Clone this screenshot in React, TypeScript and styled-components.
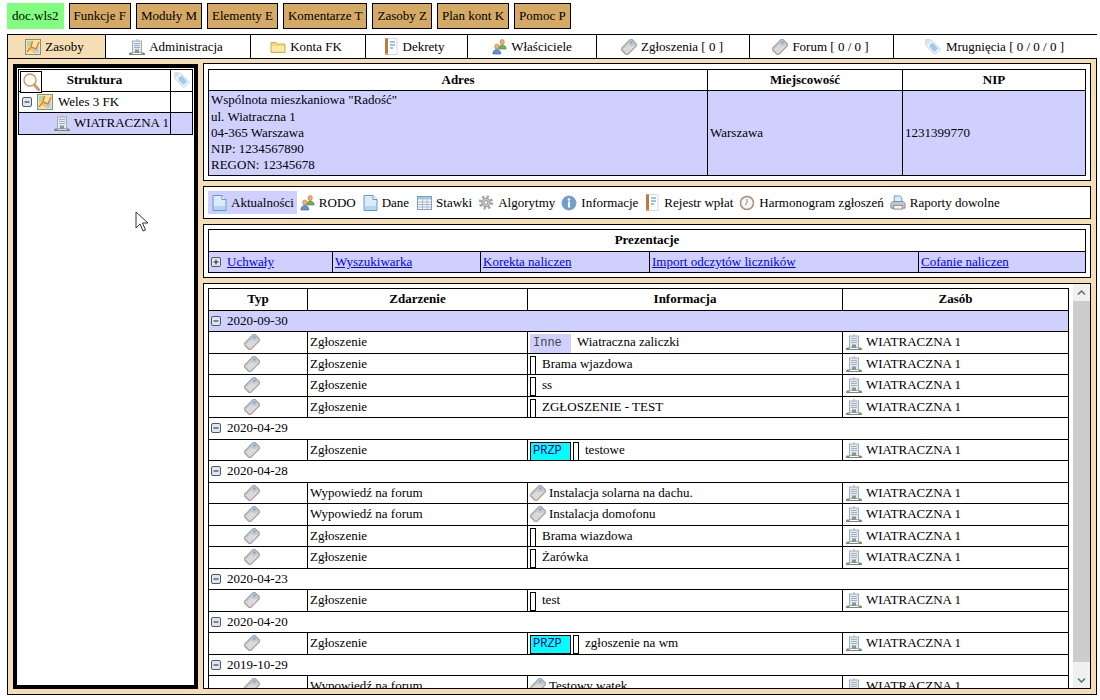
import React from "react";
import styled, { createGlobalStyle } from "styled-components";

const GlobalStyle = createGlobalStyle`
  html, body {
    margin: 0;
    padding: 0;
    background: #fff;
    color: #000;
    font-family: "Liberation Serif", "Times New Roman", serif;
    font-size: 13px;
    overflow: hidden;
  }
`;

const Page = styled.div`
  width: 1090px;
  height: 700px;
  padding: 3px 0 0 7px;
`;

const MenuBar = styled.div`
  display: flex;
  gap: 5px;
  height: 26px;
  margin-bottom: 5px;
`;

const MenuButton = styled.div<{ $active?: boolean }>`
  display: flex;
  align-items: center;
  padding: 0 ${(p) => (p.$active ? "5px" : "4px")};
  background: ${(p) => (p.$active ? "#80ff80" : "#d4aa66")};
  border: ${(p) => (p.$active ? "none" : "1px solid #000")};
  white-space: nowrap;
`;

const TabBar = styled.div`
  display: flex;
  height: 25px;
  border: 1px solid #000;
  box-sizing: border-box;
`;

const Tab = styled.div<{ $w: number; $active?: boolean; $pr?: number }>`
  width: ${(p) => p.$w}px;
  flex: none;
  box-sizing: border-box;
  display: flex;
  align-items: center;
  justify-content: center;
  gap: 4px;
  padding-right: ${(p) => p.$pr ?? 2}px;
  background: ${(p) => (p.$active ? "#f5deb3" : "#fff")};
  border-right: 1px solid #000;
  &:last-child {
    border-right: none;
  }
`;

const Body = styled.div`
  display: grid;
  grid-template-columns: 185px 1fr;
  gap: 5px;
  height: 636px;
  box-sizing: border-box;
  padding: 4px 5px 5px 5px;
  background: #f5deb3;
  border: 1px solid #000;
  border-top: none;
`;

const TreePane = styled.div`
  background: #fff;
  border: 4px solid #000;
  height: 625px;
  margin-top: 1px;
  box-sizing: border-box;
  padding: 1px;
`;

const RightColumn = styled.div`
  display: flex;
  flex-direction: column;
  gap: 5px;
  min-width: 0;
`;

const Panel = styled.div<{ $top: number }>`
  background: #fff;
  border: 1px solid #000;
  padding: ${(p) => p.$top}px 4px 4px;
`;

const Table = styled.table`
  width: 100%;
  border-collapse: collapse;
  table-layout: fixed;
  td, th {
    border: 1px solid #000;
    padding: 0 2px;
    font-size: 13px;
    height: 21.5px;
    box-sizing: border-box;
    overflow: hidden;
    white-space: nowrap;
  }
  th {
    font-weight: bold;
    text-align: center;
  }
`;

const Lavender = styled.tr`
  background: #d0d0ff;
`;

const TreeHead = styled.th`
  position: relative;
  overflow: visible !important;
`;

const TreeTagCell = styled.th`
  padding: 0 !important;
  svg {
    display: block;
    margin: 0 auto;
  }
`;

const SearchBox = styled.div`
  position: absolute;
  left: 1px;
  top: 1px;
  width: 22px;
  height: 22px;
  border: 1px solid #000;
  box-sizing: border-box;
  background: #fff;
  display: flex;
  align-items: center;
  justify-content: center;
  z-index: 1;
`;

const CellRow = styled.div<{ $indent?: number; $gap?: number }>`
  display: flex;
  align-items: center;
  gap: ${(p) => p.$gap ?? 5}px;
  padding-left: ${(p) => p.$indent ?? 0}px;
`;

const AddressHead = styled.tr`
  th {
    height: 21px;
  }
`;

const Address = styled.td`
  height: 85px !important;
  line-height: 16.25px;
  white-space: pre-line !important;
`;

const NavPanel = styled.div`
  background: #fff;
  border: 1px solid #000;
  height: 33px;
  box-sizing: border-box;
  padding: 4px 4px;
  display: flex;
`;

const NavItem = styled.div<{ $active?: boolean; $pr?: number }>`
  display: flex;
  align-items: center;
  gap: 4px;
  padding: 0 ${(p) => p.$pr ?? 3}px 0 ${(p) => (p.$active ? "4px" : "3px")};
  background: ${(p) => (p.$active ? "#d0d0ff" : "transparent")};
  white-space: nowrap;
`;

const LinkText = styled.a`
  color: #0000ee;
  text-decoration: underline;
`;

const EventsPanel = styled.div`
  flex: none;
  height: 406px;
  background: #fff;
  border: 1px solid #000;
  box-sizing: border-box;
  display: flex;
  overflow: hidden;
`;

const EventsScroll = styled.div`
  flex: 1;
  min-width: 0;
  padding: 4px 4px 0;
  overflow: hidden;
`;

const DateRow = styled.tr<{ $selected?: boolean }>`
  background: ${(p) => (p.$selected ? "#d0d0ff" : "#fff")};
`;

const TypeCell = styled.td`
  svg {
    display: block;
    margin: 0 0 0 33px;
  }
`;

const Status = styled.span<{ $cyan?: boolean }>`
  flex: none;
  box-sizing: border-box;
  width: 41px;
  height: 19px;
  margin-bottom: -3px;
  margin-right: ${(p) => (p.$cyan ? "-4px" : "0")};
  padding-left: 2px;
  font-family: "Liberation Mono", monospace;
  font-size: 12px;
  line-height: 16px;
  background: ${(p) => (p.$cyan ? "#00ffff" : "#d0d0ff")};
  border: 1px solid ${(p) => (p.$cyan ? "#000" : "#d0d0ff")};
  color: ${(p) => (p.$cyan ? "#000080" : "#444")};
`;

const Marker = styled.span`
  flex: none;
  width: 6px;
  height: 19px;
  margin-bottom: -3px;
  box-sizing: border-box;
  border: 1px solid #000;
  background: #fff;
`;

const ScrollBar = styled.div`
  flex: none;
  width: 17px;
  background: #f0f0f0;
  display: flex;
  flex-direction: column;
`;

const ScrollArrow = styled.div`
  height: 17px;
  flex: none;
  display: flex;
  align-items: center;
  justify-content: center;
`;

const ScrollThumb = styled.div`
  height: 361px;
  flex: none;
  background: #cdcdcd;
`;

const ScrollGap = styled.div`
  flex: 1;
`;

const Cursor = styled.svg`
  position: absolute;
  left: 135px;
  top: 211px;
`;

const TagIcon = () => (
  <svg width="16" height="16" viewBox="0 0 16 16" style={{ flex: "none" }}>
    <g transform="rotate(-45 8 8)">
      <rect x="0.500" y="3.500" width="15" height="9" rx="1.500" fill="#c8c8c8" stroke="#a0a0a0" />
      <path d="M2 10.500h10M2 8.500h8M2 6.500h7" stroke="#ececec" strokeWidth="1" />
      <circle cx="12.800" cy="6.500" r="1.400" fill="#6cb4f0" />
    </g>
  </svg>
);

const PriceTagIcon = () => (
  <svg width="18" height="18" viewBox="0 0 18 18">
    <path d="M1.500 3.500 2 1.500 7 2 16.500 11 10.500 16.500 2 7.500Z" fill="#f0f3f6" stroke="#cdd2d6" />
    <path d="M6 6 9 5 14 10.500 10.500 14 5.500 9Z" fill="#9accf2" />
    <circle cx="4" cy="4" r="1" fill="#fff" stroke="#aab" strokeWidth="0.5" />
  </svg>
);

const BuildingIcon = () => (
  <svg width="16" height="16" viewBox="0 0 16 16" style={{ flex: "none" }}>
    <path d="M8 0v2" stroke="#aaa" />
    <rect x="3.500" y="2" width="9" height="11.500" fill="#e4e9ec" stroke="#a4acb0" />
    <path d="M5 4.500h6M5 6.500h6M5 8.500h6" stroke="#94b4d0" strokeWidth="1" />
    <rect x="6" y="10.500" width="4" height="3.500" fill="#8a9298" />
    <path d="M0 15.500c0-2 2-2.500 3.500-1.500v1.500ZM16 15.500c0-2-2-2.500-3.500-1.500v1.500Z" fill="#5f9c5c" />
    <path d="M0 15.500h16" stroke="#7a8a7e" />
  </svg>
);

const MapIcon = () => (
  <svg width="16" height="16" viewBox="0 0 16 16" style={{ flex: "none" }}>
    <rect x="0.500" y="0.500" width="15" height="15" fill="#f8e6a0" stroke="#7d9480" />
    <path d="M2 2h5l-1 5-4 2Z" fill="#b4d8a8" />
    <path d="M10 9l4-2v7H8Z" fill="#b4d4ec" />
    <path d="M2 9h4l3 2 1 3" fill="#f0c060" />
    <path d="M2 13 6 8 7.500 2 M6 8l5 2 3-7" stroke="#dc8038" strokeWidth="1.400" fill="none" />
  </svg>
);

const FolderIcon = () => (
  <svg width="16" height="16" viewBox="0 0 16 16">
    <path d="M1 3.500h5l1 1.500h8v8.500H1Z" fill="#f8d878" stroke="#d4ae58" />
    <path d="M2 7h12v5.500H2Z" fill="#fde9a8" />
  </svg>
);

const NotesIcon = () => (
  <svg width="16" height="17" viewBox="0 0 16 17" style={{ flex: "none" }}>
    <rect x="3" y="0.500" width="11" height="16" fill="#fff" stroke="#d2dce6" />
    <rect x="2" y="0" width="3" height="17" fill="#e59a52" />
    <path d="M2 2h3M2 4h3M2 6h3M2 8h3M2 10h3M2 12h3M2 14h3" stroke="#9a5a20" />
    <path d="M7 4h5M7 7h5M7 10h3" stroke="#7eb0de" strokeWidth="1.400" />
  </svg>
);

const PeopleIcon = () => (
  <svg width="15" height="16" viewBox="0 0 17 16" preserveAspectRatio="none" style={{ flex: "none" }}>
    <circle cx="11.500" cy="3" r="2.500" fill="#f0b070" stroke="#b86a2a" strokeWidth="0.600" />
    <path d="M7.500 10c0-3 2-4 4-4s4.500 1 4.500 4Z" fill="#6db35a" stroke="#3f7a3a" strokeWidth="0.600" />
    <circle cx="5.500" cy="7.500" r="2.500" fill="#f0b070" stroke="#b86a2a" strokeWidth="0.600" />
    <path d="M1 15c0-3 2-4.500 4.500-4.500S10 12 10 15Z" fill="#5a94d8" stroke="#2c5c9c" strokeWidth="0.600" />
  </svg>
);

const DocIcon = () => (
  <svg width="15" height="18" viewBox="0 0 15 18">
    <path d="M1 1.500h9l4 4v11H1Z" fill="#dcebf9" stroke="#5b9bd5" />
    <path d="M10 1.500v4h4" fill="#fff" stroke="#5b9bd5" />
    <path d="M2 12h11v4H2Z" fill="#b4d4f0" />
  </svg>
);

const SheetIcon = () => (
  <svg width="15" height="16" viewBox="0 0 15 16">
    <rect x="0.500" y="1.500" width="14" height="13" fill="#f6f9fc" stroke="#7aa2cc" />
    <rect x="1" y="2" width="13" height="2.500" fill="#a8c4e0" />
    <path d="M1 7h13M1 9.500h13M1 12h13M5.500 4.500v10M10 4.500v10" stroke="#a8b8c8" />
  </svg>
);

const GearIcon = () => (
  <svg width="16" height="17" viewBox="0 0 17 17">
    <circle cx="8.500" cy="8.500" r="6.200" fill="none" stroke="#a8a8a8" strokeWidth="3" strokeDasharray="2.400 2.460" />
    <circle cx="8.500" cy="8.500" r="4.600" fill="#c8c8c8" stroke="#8e8e8e" />
    <circle cx="8.500" cy="8.500" r="2" fill="#fff" stroke="#8e8e8e" />
  </svg>
);

const InfoIcon = () => (
  <svg width="16" height="16" viewBox="0 0 16 16">
    <circle cx="8" cy="8" r="7" fill="#6f9ed6" stroke="#8a99a8" />
    <circle cx="8" cy="4.500" r="1.200" fill="#fff" />
    <rect x="7" y="6.500" width="2" height="6" fill="#fff" />
  </svg>
);

const ClockIcon = () => (
  <svg width="16" height="16" viewBox="0 0 16 16">
    <circle cx="8" cy="8" r="6.500" fill="#f4f7fa" stroke="#b09070" strokeWidth="1.600" />
    <path d="M8 4v4l-2 2" fill="none" stroke="#7090b0" />
  </svg>
);

const PrinterIcon = () => (
  <svg width="16" height="17" viewBox="0 0 17 17">
    <path d="M4.500 1.500h6l2 2v5h-8Z" fill="#dcebf9" stroke="#5b9bd5" />
    <path d="M1 9.500 3 7.500h11l2 2v5H1Z" fill="#c4c8cc" stroke="#808890" />
    <rect x="4" y="11.500" width="9" height="4" fill="#f4f4f4" stroke="#808890" />
  </svg>
);

const SearchIcon = () => (
  <svg width="19" height="20" viewBox="0 0 19 20">
    <circle cx="8" cy="8" r="6" fill="#fff" stroke="#d09858" strokeWidth="1.400" />
    <path d="M12.500 13l4 4.500" stroke="#c8a070" strokeWidth="3.200" strokeLinecap="round" />
  </svg>
);

const ExpandBox = ({ open }: { open?: boolean }) => (
  <svg width="10" height="10" viewBox="0 0 10 10" style={{ flex: "none" }}>
    <rect x="0.500" y="0.500" width="9" height="9" rx="1.500" fill="#dfe6ee" stroke="#4a5a6a" />
    <path d={open ? "M2.500 5h5" : "M2.500 5h5M5 2.500v5"} stroke="#223" />
  </svg>
);

const Chevron = ({ down }: { down?: boolean }) => (
  <svg width="9" height="6" viewBox="0 0 9 6">
    <path d={down ? "M1 1.500l3.500 3.500 3.500-3.500" : "M1 4.500l3.500-3.500 3.500 3.500"} fill="none" stroke="#4f7f5f" strokeWidth="1.600" />
  </svg>
);

type EventRow = {
  kind: string;
  info: string;
  status?: string;
  forum?: boolean;
  plain?: boolean;
};

type EventGroup = { date: string; selected?: boolean; rows: EventRow[] };

const groups: EventGroup[] = [
  {
    date: "2020-09-30",
    selected: true,
    rows: [
      { kind: "Zgłoszenie", info: "Wiatraczna zaliczki", status: "Inne", plain: true },
      { kind: "Zgłoszenie", info: "Brama wjazdowa" },
      { kind: "Zgłoszenie", info: "ss" },
      { kind: "Zgłoszenie", info: "ZGŁOSZENIE - TEST" },
    ],
  },
  {
    date: "2020-04-29",
    rows: [{ kind: "Zgłoszenie", info: "testowe", status: "PRZP" }],
  },
  {
    date: "2020-04-28",
    rows: [
      { kind: "Wypowiedź na forum", info: "Instalacja solarna na dachu.", forum: true },
      { kind: "Wypowiedź na forum", info: "Instalacja domofonu", forum: true },
      { kind: "Zgłoszenie", info: "Brama wiazdowa" },
      { kind: "Zgłoszenie", info: "Żarówka" },
    ],
  },
  {
    date: "2020-04-23",
    rows: [{ kind: "Zgłoszenie", info: "test" }],
  },
  {
    date: "2020-04-20",
    rows: [{ kind: "Zgłoszenie", info: "zgłoszenie na wm", status: "PRZP" }],
  },
  {
    date: "2019-10-29",
    rows: [{ kind: "Wypowiedź na forum", info: "Testowy watek", forum: true }],
  },
];

const menu = ["Funkcje F", "Moduły M", "Elementy E", "Komentarze T", "Zasoby Z", "Plan kont K", "Pomoc P"];

const App: React.FC = () => {
  return (
    <>
      <GlobalStyle />
      <Page>
        <MenuBar>
          <MenuButton $active>doc.wls2</MenuButton>
          {menu.map((m) => (
            <MenuButton key={m}>{m}</MenuButton>
          ))}
        </MenuBar>

        <TabBar>
          <Tab $w={98} $active $pr={4}><MapIcon />Zasoby</Tab>
          <Tab $w={145} $pr={4}><BuildingIcon />Administracja</Tab>
          <Tab $w={115} $pr={4}><FolderIcon />Konta FK</Tab>
          <Tab $w={102} $pr={6}><NotesIcon />Dekrety</Tab>
          <Tab $w={129} $pr={0}><PeopleIcon />Właściciele</Tab>
          <Tab $w={153}><TagIcon />Zgłoszenia [ 0 ]</Tab>
          <Tab $w={144}><TagIcon />Forum [ 0 / 0 ]</Tab>
          <Tab $w={204} $pr={4}><PriceTagIcon />Mrugnięcia [ 0 / 0 / 0 ]</Tab>
        </TabBar>

        <Body>
          <TreePane>
            <Table>
              <colgroup>
                <col />
                <col style={{ width: 22 }} />
              </colgroup>
              <tbody>
                <tr>
                  <TreeHead>
                    <SearchBox><SearchIcon /></SearchBox>
                    Struktura
                  </TreeHead>
                  <TreeTagCell><PriceTagIcon /></TreeTagCell>
                </tr>
                <tr>
                  <td>
                    <CellRow $indent={1}>
                      <ExpandBox open />
                      <MapIcon />
                      Weles 3 FK
                    </CellRow>
                  </td>
                  <td />
                </tr>
                <Lavender>
                  <td>
                    <CellRow $indent={33} $gap={4}>
                      <BuildingIcon />
                      WIATRACZNA 1
                    </CellRow>
                  </td>
                  <td />
                </Lavender>
              </tbody>
            </Table>
          </TreePane>

          <RightColumn>
            <Panel $top={5}>
              <Table>
                <colgroup>
                  <col />
                  <col style={{ width: 195 }} />
                  <col style={{ width: 183 }} />
                </colgroup>
                <tbody>
                  <AddressHead>
                    <th>Adres</th>
                    <th>Miejscowość</th>
                    <th>NIP</th>
                  </AddressHead>
                  <Lavender>
                    <Address>{`Wspólnota mieszkaniowa "Radość"
ul. Wiatraczna 1
04-365 Warszawa
NIP: 1234567890
REGON: 12345678`}</Address>
                    <td>Warszawa</td>
                    <td>1231399770</td>
                  </Lavender>
                </tbody>
              </Table>
            </Panel>

            <NavPanel>
              <NavItem $active><DocIcon />Aktualności</NavItem>
              <NavItem $pr={4}><PeopleIcon />RODO</NavItem>
              <NavItem $pr={5}><DocIcon />Dane</NavItem>
              <NavItem><SheetIcon />Stawki</NavItem>
              <NavItem><GearIcon />Algorytmy</NavItem>
              <NavItem><InfoIcon />Informacje</NavItem>
              <NavItem><NotesIcon />Rejestr wpłat</NavItem>
              <NavItem><ClockIcon />Harmonogram zgłoszeń</NavItem>
              <NavItem><PrinterIcon />Raporty dowolne</NavItem>
            </NavPanel>

            <Panel $top={4}>
              <Table>
                <colgroup>
                  <col style={{ width: 124 }} />
                  <col style={{ width: 148 }} />
                  <col style={{ width: 169 }} />
                  <col style={{ width: 269 }} />
                  <col />
                </colgroup>
                <tbody>
                  <tr>
                    <th colSpan={5}>Prezentacje</th>
                  </tr>
                  <Lavender>
                    <td>
                      <CellRow $gap={6}>
                        <ExpandBox />
                        <LinkText>Uchwały</LinkText>
                      </CellRow>
                    </td>
                    <td><LinkText>Wyszukiwarka</LinkText></td>
                    <td><LinkText>Korekta naliczen</LinkText></td>
                    <td><LinkText>Import odczytów liczników</LinkText></td>
                    <td><LinkText>Cofanie naliczen</LinkText></td>
                  </Lavender>
                </tbody>
              </Table>
            </Panel>

            <EventsPanel>
              <EventsScroll>
                <Table>
                  <colgroup>
                    <col style={{ width: 99 }} />
                    <col style={{ width: 220 }} />
                    <col style={{ width: 315 }} />
                    <col />
                  </colgroup>
                  <tbody>
                    <tr>
                      <th>Typ</th>
                      <th>Zdarzenie</th>
                      <th>Informacja</th>
                      <th>Zasób</th>
                    </tr>
                    {groups.map((g) => (
                      <React.Fragment key={g.date}>
                        <DateRow $selected={g.selected}>
                          <td colSpan={4}>
                            <CellRow $gap={6}>
                              <ExpandBox open />
                              {g.date}
                            </CellRow>
                          </td>
                        </DateRow>
                        {g.rows.map((r, i) => (
                          <tr key={i}>
                            <TypeCell><TagIcon /></TypeCell>
                            <td>{r.kind}</td>
                            <td>
                              <CellRow $gap={r.forum ? 3 : 6}>
                                {r.status && <Status $cyan={!r.plain}>{r.status}</Status>}
                                {r.forum ? <TagIcon /> : !r.plain && <Marker />}
                                {r.info}
                              </CellRow>
                            </td>
                            <td>
                              <CellRow $indent={1} $gap={4}>
                                <BuildingIcon />
                                WIATRACZNA 1
                              </CellRow>
                            </td>
                          </tr>
                        ))}
                      </React.Fragment>
                    ))}
                  </tbody>
                </Table>
              </EventsScroll>
              <ScrollBar>
                <ScrollArrow><Chevron /></ScrollArrow>
                <ScrollThumb />
                <ScrollGap />
                <ScrollArrow><Chevron down /></ScrollArrow>
              </ScrollBar>
            </EventsPanel>
          </RightColumn>
        </Body>

        <Cursor width="14" height="21" viewBox="0 0 14 21">
          <path d="M1 1v16l4-4 3 7 2.500-1-3-7h5.500Z" fill="#fff" stroke="#333" />
        </Cursor>
      </Page>
    </>
  );
};

export default App;
